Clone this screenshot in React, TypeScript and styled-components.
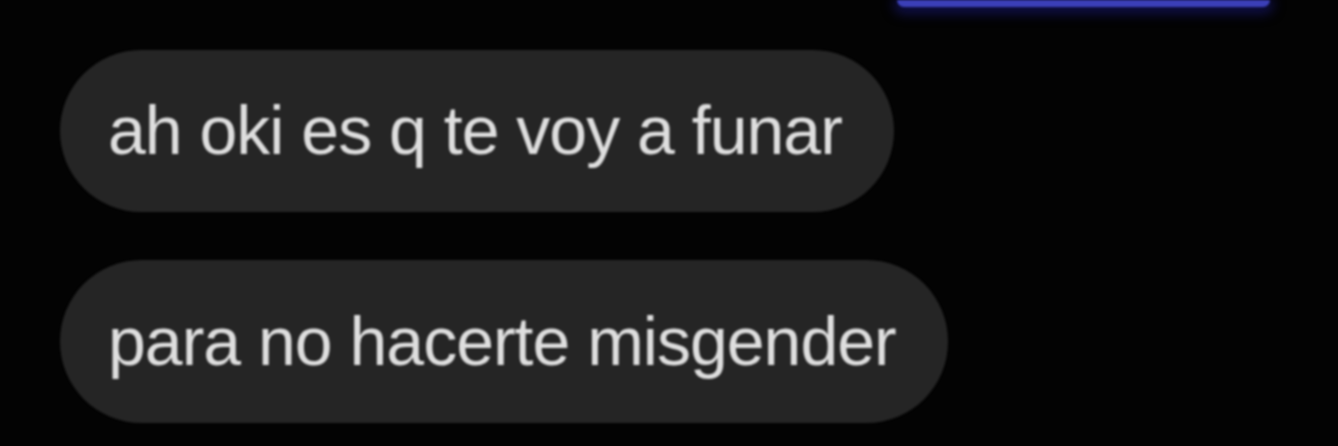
import React from "react";
import styled, { createGlobalStyle } from "styled-components";

const Global = createGlobalStyle`
  html, body { margin: 0; padding: 0; background: #030303; }
  body { width: 1338px; height: 446px; overflow: hidden; }
`;

const Screen = styled.div`
  width: 1338px;
  height: 446px;
  background: #030303;
  display: flex;
  flex-direction: column;
  align-items: flex-start;
  padding: 0 0 0 60px;
  box-sizing: border-box;
  overflow: hidden;
`;

const SentRow = styled.div`
  align-self: stretch;
  display: flex;
  justify-content: flex-end;
  padding-right: 68px;
  height: 50px;
  align-items: flex-start;
`;

const SentBubble = styled.div`
  width: 373px;
  height: 7px;
  border-radius: 0 0 40px 40px;
  background: #3b3fb8;
  box-shadow: 0 3px 12px 4px rgba(25, 25, 130, 0.55);
  filter: blur(1.2px);
`;

const Thread = styled.div`
  display: flex;
  flex-direction: column;
  align-items: flex-start;
  gap: 48px;
`;

const Bubble = styled.div<{ $h: number }>`
  height: ${(p) => p.$h}px;
  box-sizing: border-box;
  display: flex;
  align-items: center;
  padding: 0 52px 2px 48px;
  border-radius: 82px;
  background: #252525;
  color: #dedede;
  font-family: "Liberation Sans", Arial, sans-serif;
  font-size: 68px;
  letter-spacing: -1px;
  white-space: nowrap;
  filter: blur(0.8px);
`;

export default function App() {
  return (
    <>
      <Global />
      <Screen>
        <SentRow>
          <SentBubble />
        </SentRow>
        <Thread>
          <Bubble $h={162}>ah oki es q te voy a funar</Bubble>
          <Bubble $h={163}>para no hacerte misgender</Bubble>
        </Thread>
      </Screen>
    </>
  );
}
